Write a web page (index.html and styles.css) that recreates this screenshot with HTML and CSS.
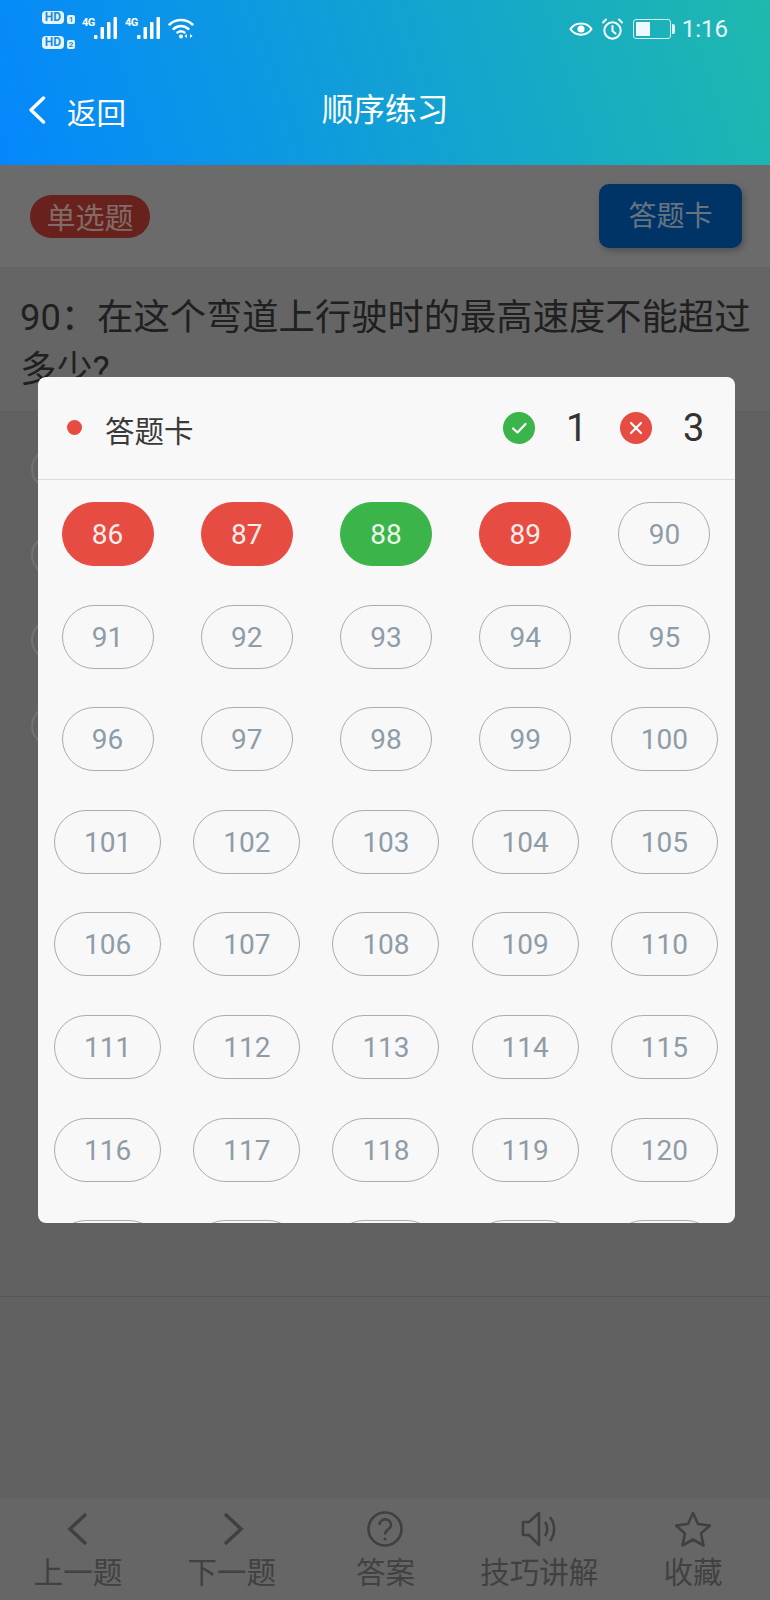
FILE: index.html
```html
<!DOCTYPE html>
<html lang="zh-CN">
<head>
  <meta charset="UTF-8" />
  <title>顺序练习</title>
  <meta name="viewport" content="width=device-width, initial-scale=1" />
  <link rel="stylesheet" href="styles.css">
</head>
<body>

<div class="screen">
  <header class="header">
    <div class="status">
      <div class="sims">
        <div class="sim"><span class="hd">HD</span><span class="sim-no">1</span></div>
        <div class="sim"><span class="hd">HD</span><span class="sim-no">2</span></div>
      </div>
      <div class="net">
        <span class="net-type">4G</span>
        <svg class="bars" viewBox="0 0 23 22"><rect x="0" y="18" width="3.500" height="4" rx="1"/><rect x="6.500" y="10" width="3.500" height="12" rx="1"/><rect x="13" y="5" width="3.500" height="17" rx="1"/><rect x="19.500" y="0" width="3.500" height="22" rx="1"/></svg>
      </div>
      <div class="net">
        <span class="net-type">4G</span>
        <svg class="bars" viewBox="0 0 23 22"><rect x="0" y="18" width="3.500" height="4" rx="1"/><rect x="6.500" y="10" width="3.500" height="12" rx="1"/><rect x="13" y="5" width="3.500" height="17" rx="1"/><rect x="19.500" y="0" width="3.500" height="22" rx="1"/></svg>
      </div>
      <svg class="wifi" viewBox="0 0 26 21" fill="none" stroke="#fff" stroke-width="2.400" stroke-linecap="round"><path d="M1.500 6.500C8 .5 18 .5 24.500 6.500"/><path d="M5.500 11C10 7 16 7 20.500 11"/><path d="M9.500 14.500C11.500 13 14.500 13 16.500 14.500"/><circle cx="13" cy="18.500" r="2" fill="#fff" stroke="none"/><path d="M19 16v4l-2.500-2zM22 16v4l2.500-2z" fill="#fff" stroke="none"/></svg>

      <div class="status-right">
        <svg class="eye" viewBox="0 0 24 18" fill="none" stroke="#fff" stroke-width="2"><path d="M1.500 9C6 1.500 18 1.500 22.500 9C18 16.500 6 16.500 1.500 9Z"/><circle cx="12" cy="9" r="3.600" fill="#fff" stroke="none"/></svg>
        <svg class="alarm" viewBox="0 0 23 22" fill="none" stroke="#fff" stroke-width="2" stroke-linecap="round"><circle cx="11.500" cy="12.500" r="8.200"/><path d="M11.500 8v5l3 2.500"/><path d="M2 4.500L5 1.500M21 4.500L18 1.500"/></svg>
        <div class="battery"><div class="battery-fill"></div></div>
        <span class="battery-tip"></span>
        <span class="time">1:16</span>
      </div>
    </div>
    <div class="nav">
      <div class="back">
        <svg class="back-icon" viewBox="0 0 18 28" fill="none" stroke="#fff" stroke-width="3.400" stroke-linecap="round" stroke-linejoin="round"><path d="M15.500 2L3 14l12.500 12"/></svg>
        <span class="back-text">返回</span>
      </div>
      <div class="title">顺序练习</div>
    </div>
  </header>

  <div class="page">
    <div class="toolbar">
      <span class="type-tag">单选题</span>
      <span class="card-btn">答题卡</span>
    </div>
    <div class="question">90：在这个弯道上行驶时的最高速度不能超过多少?</div>
    <div class="options">
      <span class="radio"></span>
      <span class="radio"></span>
      <span class="radio"></span>
      <span class="radio"></span>
    </div>
    <div class="spacer"></div>
    <footer class="tabs">
      <div class="tab">
        <svg class="tab-icon" viewBox="0 0 36 36"><path d="M26 3L10 18l16 15"/></svg>
        <span>上一题</span>
      </div>
      <div class="tab">
        <svg class="tab-icon" viewBox="0 0 36 36"><path d="M11 3l16 15-16 15"/></svg>
        <span>下一题</span>
      </div>
      <div class="tab">
        <svg class="tab-icon tab-icon-thin" viewBox="0 0 36 36"><circle cx="18" cy="18" r="16.500"/><path d="M12.500 14c0-7.500 11.500-7.500 11.500 0 0 4.500-6 4.500-6 9.500"/><circle class="dot" cx="18" cy="28" r="1.500"/></svg>
        <span>答案</span>
      </div>
      <div class="tab">
        <svg class="tab-icon tab-icon-thin" viewBox="0 0 36 36"><path d="M18 2L8 11H2v13h6l10 10z"/><path d="M24 11c3 4 3 10 0 14"/><path d="M29 6c5.500 7 5.500 17 0 24"/></svg>
        <span>技巧讲解</span>
      </div>
      <div class="tab">
        <svg class="tab-icon tab-icon-thin" viewBox="0 0 36 36"><path d="M18 2l5 11 12 1.500-9 8 2.500 12L18 28.500 7.500 34.500l2.500-12-9-8L13 13z"/></svg>
        <span>收藏</span>
      </div>
    </footer>
  </div>

  <div class="mask"></div>

  <div class="sheet">
    <div class="sheet-head">
      <span class="sheet-dot"></span>
      <span class="sheet-title">答题卡</span>
      <div class="stats">
        <svg class="stat-icon" viewBox="0 0 32 32"><circle cx="16" cy="16" r="16" fill="#3bb54a"/><path d="M10 16.500l4.500 4L22.500 12" fill="none" stroke="#fff" stroke-width="2.200" stroke-linecap="round" stroke-linejoin="round"/></svg>
        <span class="stat-num">1</span>
        <svg class="stat-icon stat-icon-wrong" viewBox="0 0 32 32"><circle cx="16" cy="16" r="16" fill="#e74c42"/><path d="M11 11l10 10M21 11L11 21" fill="none" stroke="#fff" stroke-width="2.200" stroke-linecap="round"/></svg>
        <span class="stat-num">3</span>
      </div>
    </div>
    <div class="grid">
      <div class="num wrong">86</div>
      <div class="num wrong">87</div>
      <div class="num right">88</div>
      <div class="num wrong">89</div>
      <div class="num">90</div>
      <div class="num">91</div>
      <div class="num">92</div>
      <div class="num">93</div>
      <div class="num">94</div>
      <div class="num">95</div>
      <div class="num">96</div>
      <div class="num">97</div>
      <div class="num">98</div>
      <div class="num">99</div>
      <div class="num wide">100</div>
      <div class="num wide">101</div>
      <div class="num wide">102</div>
      <div class="num wide">103</div>
      <div class="num wide">104</div>
      <div class="num wide">105</div>
      <div class="num wide">106</div>
      <div class="num wide">107</div>
      <div class="num wide">108</div>
      <div class="num wide">109</div>
      <div class="num wide">110</div>
      <div class="num wide">111</div>
      <div class="num wide">112</div>
      <div class="num wide">113</div>
      <div class="num wide">114</div>
      <div class="num wide">115</div>
      <div class="num wide">116</div>
      <div class="num wide">117</div>
      <div class="num wide">118</div>
      <div class="num wide">119</div>
      <div class="num wide">120</div>
      <div class="num wide">121</div>
      <div class="num wide">122</div>
      <div class="num wide">123</div>
      <div class="num wide">124</div>
      <div class="num wide">125</div>
    </div>
  </div>
</div>

</body>
</html>
```

FILE: styles.css
```css
* {
  box-sizing: border-box;
}
body {
  margin: 0;
  font-family: Roboto, "Noto Sans CJK SC", sans-serif;
}
.screen {
  position: relative;
  width: 770px;
  height: 1600px;
  overflow: hidden;
  display: flex;
  flex-direction: column;
}

/* header */
.header {
  height: 165px;
  color: #fff;
  background: linear-gradient(72deg, #0587fd, #1fb9ad);
}
.status {
  height: 58px;
  display: flex;
  padding-left: 42px;
}
.sims {
  width: 40px;
  padding-top: 11px;
  display: flex;
  flex-direction: column;
  gap: 12px;
}
.sim {
  height: 13px;
  display: flex;
  align-items: flex-end;
  gap: 3px;
}
.hd {
  width: 22px;
  height: 13px;
  border-radius: 4px;
  background: #e8f4fc;
  color: #1590e0;
  font-size: 12px;
  font-weight: 700;
  line-height: 13px;
  text-align: center;
}
.sim-no {
  width: 8px;
  height: 9px;
  border-radius: 2px;
  background: #e8f4fc;
  color: #1590e0;
  font-size: 8px;
  font-weight: 700;
  line-height: 9px;
  text-align: center;
}
.net {
  display: flex;
  width: 43px;
  padding-top: 17px;
}
.net-type {
  width: 12px;
  font-size: 11px;
  font-weight: 700;
  letter-spacing: -0.5px;
  line-height: 11px;
}
.bars {
  width: 23px;
  height: 22px;
  fill: #fff;
}
.wifi {
  width: 26px;
  height: 21px;
  margin-top: 18px;
}
.status-right {
  margin-left: auto;
  display: flex;
  align-items: center;
  height: 58px;
  padding-right: 42px;
}
.eye {
  width: 24px;
  height: 18px;
}
.alarm {
  width: 23px;
  height: 22px;
  margin-left: 8px;
}
.battery {
  width: 38px;
  height: 20px;
  margin-left: 9px;
  padding: 2px;
  border: 1px solid #d8f2f6;
  border-radius: 3px;
}
.battery-fill {
  width: 14px;
  height: 100%;
  background: #eef9fd;
}
.battery-tip {
  width: 3px;
  height: 10px;
  margin-left: 1px;
  background: #d8f2f6;
  border-radius: 0 2px 2px 0;
}
.time {
  margin-left: 7px;
  font-size: 24px;
  color: #e6f6fa;
}
.nav {
  height: 107px;
  padding: 0 0 3px 28px;
  display: flex;
  align-items: center;
  position: relative;
}
.back {
  display: flex;
  align-items: center;
  gap: 21px;
}
.back-text {
  font-size: 29.500px;
  padding-top: 2px;
}
.back-icon {
  width: 18px;
  height: 28px;
}
.title {
  position: absolute;
  left: 0;
  right: 0;
  top: 33px;
  text-align: center;
  font-size: 31.700px;
  line-height: 40px;
}

/* page behind the mask */
.page {
  flex: 1;
  display: flex;
  flex-direction: column;
  background: #c2c2c2;
}
.toolbar {
  height: 102px;
  padding: 0 28px 0 30px;
  display: flex;
  justify-content: space-between;
  align-items: center;
  background: #d6d6d6;
}
.type-tag {
  width: 120px;
  height: 43px;
  border-radius: 22px;
  background: #d04238;
  color: #ffd8d0;
  font-size: 29px;
  line-height: 49px;
  text-align: center;
}
.card-btn {
  width: 143px;
  height: 64px;
  border-radius: 10px;
  background: #0066cc;
  color: #cfe6ff;
  font-size: 28px;
  line-height: 65px;
  text-align: center;
  box-shadow: 2px 3px 6px rgba(0,0,0,0.25);
}
.question {
  padding: 25px 10px 15px 20px;
  font-size: 36.300px;
  line-height: 52px;
  color: #404040;
  background: #cbcbcb;
}
.options {
  height: 886px;
  padding: 37px 0 0 31px;
  display: flex;
  flex-direction: column;
  gap: 45.700px;
  border-top: 1px solid #bcbcbc;
  border-bottom: 1px solid #acacac;
}
.radio {
  width: 40px;
  height: 40px;
  border-radius: 50%;
  border: 2px solid #e4e4e4;
}
.spacer {
  flex: 1;
}
.tabs {
  height: 102px;
  display: flex;
  padding: 12px 0 0 1px;
  background: #cccccc;
  border-top: 1px solid #c2c2c2;
}
.tab {
  flex: 1;
  display: flex;
  flex-direction: column;
  align-items: center;
  gap: 9px;
  color: #828282;
  font-size: 29.500px;
  line-height: 34px;
}
.tab-icon {
  width: 36px;
  height: 36px;
  fill: none;
  stroke: #808080;
  stroke-width: 3.500;
}
.tab-icon-thin {
  stroke-width: 2.600;
  stroke-linejoin: round;
}
.dot {
  fill: #808080;
  stroke: none;
}

/* mask and answer sheet */
.mask {
  position: absolute;
  left: 0;
  right: 0;
  top: 165px;
  bottom: 0;
  background: rgba(0,0,0,0.5);
}
.sheet {
  position: absolute;
  left: 38px;
  top: 377px;
  width: 697px;
  height: 846px;
  overflow: hidden;
  border-radius: 8px;
  background: #f8f8f8;
}
.sheet-head {
  height: 103px;
  padding: 0 31px 1px 29px;
  display: flex;
  align-items: center;
  border-bottom: 1px solid #dcdcdc;
}
.sheet-dot {
  width: 15px;
  height: 15px;
  border-radius: 50%;
  background: #e74c42;
}
.sheet-title {
  margin-left: 23px;
  padding-top: 2px;
  font-size: 29.500px;
  color: #3a3a3a;
}
.stats {
  margin-left: auto;
  display: flex;
  align-items: center;
}
.stat-icon {
  width: 32px;
  height: 32px;
}
.stat-icon-wrong {
  margin-left: 33px;
}
.stat-num {
  width: 21px;
  margin-left: 31px;
  font-size: 38px;
  color: #333;
}
.grid {
  display: grid;
  grid-template-columns: repeat(5, 1fr);
  row-gap: 38.600px;
  justify-items: center;
  padding: 22px 1px 0 0;
}
.num {
  width: 92px;
  height: 64px;
  border: 1px solid #a4aeb5;
  border-radius: 32px;
  color: #8e9ca8;
  font-size: 28px;
  line-height: 63px;
  text-align: center;
}
.wide {
  width: 107px;
}
.wrong {
  background: #e74c42;
  border-color: #e74c42;
  color: #fbeeea;
}
.right {
  background: #3bb54a;
  border-color: #3bb54a;
  color: #eaf7ea;
}
```
